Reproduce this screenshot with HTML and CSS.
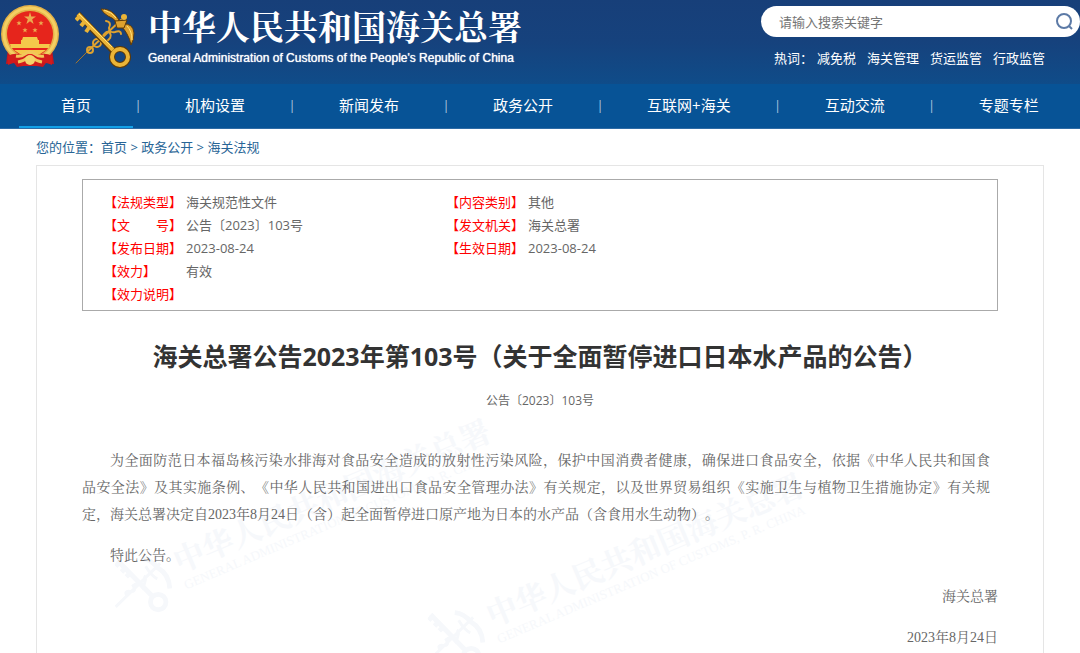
FILE: index.html
```
<!DOCTYPE html>
<html lang="zh-CN">
<head>
  <meta charset="UTF-8">
  <meta name="viewport" content="width=device-width, initial-scale=1">
  <title>海关总署公告2023年第103号</title>
  <link rel="stylesheet" href="styles.css">
</head>
<body>
  <header>
    <div class="header-top">
      <a class="logo" href="#">
        <svg class="emblem" viewBox="0 0 60 64" aria-hidden="true">
          <path d="M8 44 L6 59 L14 58 L17 62 L30 60 L43 62 L46 58 L54 59 L52 44 Z" fill="#c8161d"/>
          <circle cx="30" cy="29" r="29" fill="#e3b048"/>
          <circle cx="30" cy="29" r="26" fill="none" stroke="#f3cf63" stroke-width="3"/>
          <circle cx="30" cy="29" r="23" fill="#e6251c"/>
          <path d="M30 7 L31.300 11.500 L36 11.500 L32.200 14.300 L33.600 19 L30 16.200 L26.400 19 L27.800 14.300 L24 11.500 L28.700 11.500 Z" fill="#ecab50"/>
          <g fill="#ecab50">
            <path id="star" d="M19 15.500 l.7 1.800 h1.900 l-1.500 1.200 .6 1.900 -1.700-1.100 -1.700 1.100 .6-1.900 -1.500-1.200 h1.900z"/>
            <use href="#star" x="22"/>
            <use href="#star" x="6" y="7"/>
            <use href="#star" x="16" y="7"/>
          </g>
          <path d="M23 32 h14 l1 3 h-16z M21 35 h18 v4 h11 l-1 4 h-38 l-1-4 h11z M14 45 h32 l-6 4 h-20z" fill="#f4c84a"/>
          <path d="M8 51 Q15 47 22 50 H38 Q45 47 52 51 L52 60 Q46 57 42 58 L38 61 H22 L18 58 Q14 57 8 60 Z" fill="#d21b1c"/>
          <path d="M16 51 Q21 52 25 49 Q30 45 35 49 Q39 52 44 51 M18 57 Q24 56 27 53 H33 Q36 56 42 57" fill="none" stroke="#f2c75a" stroke-width="3"/>
          <circle cx="30" cy="55" r="5" fill="#f6d36a"/>
        </svg>
        <svg class="keys" viewBox="0 0 60 60" aria-hidden="true">
          <g fill="none" stroke="#dfa22e" stroke-linecap="round">
            <path d="M1 55 L13 43" stroke="#a5762b" stroke-width="1"/>
            <path d="M13 43 L46 12" stroke-width="2"/>
            <circle cx="15" cy="42" r="3" stroke-width="2"/>
            <circle cx="22" cy="35" r="4" stroke-width="2"/>
            <path d="M31 13 Q37 14 34 20 Q34 25 40 24 Q46 22 46 26 M26 31 Q31 21 35 25 Q38 30 30 34" stroke-width="2"/>
          </g>
          <path d="M3 6 L38 43" stroke="#5e3a08" stroke-width="6"/>
          <circle cx="45" cy="49" r="8" fill="none" stroke="#5e3a08" stroke-width="6"/>
          <g fill="none" stroke="#eab437">
            <path d="M3 6 L38 42" stroke-width="4"/>
            <path d="M5 8 L1 12 M10 13 L6 18 M15 18 L11 24" stroke-width="4"/>
            <circle cx="45" cy="49" r="8" stroke-width="4"/>
          </g>
          <g fill="#dfa22e" stroke="#5e3a08" stroke-width="1">
            <path d="M26 1 Q37 0 44 12 L42 15 Q39 10 33 8 Q28 5 26 1Z"/>
            <path d="M48 16 Q58 15 59 25 Q59 32 56 37 Q55 31 52 26 Q49 20 46 19Z"/>
            <path d="M40 13 L52 12 L49 20 L42 20Z"/>
          </g>
          <circle cx="49" cy="9" r="3" fill="#eab437"/>
          <path d="M29 2 Q37 4 41 10 M52 18 Q57 23 57 32 M4 6 L37 39" fill="none" stroke="#ffe27a" stroke-width="1"/>
        </svg>
        <span class="site-name">
          <strong>中华人民共和国海关总署</strong>
          <span lang="en">General Administration of Customs of the People's Republic of China</span>
        </span>
      </a>
      <div class="search-area">
        <form class="search" role="search">
          <input type="text" placeholder="请输入搜索关键字" aria-label="请输入搜索关键字">
          <button type="button" aria-label="搜索">
            <svg viewBox="0 0 18 18" aria-hidden="true"><circle cx="8" cy="8" r="7"/><path d="M13 13 L16 16"/></svg>
          </button>
        </form>
        <div class="hot-words">
          <span>热词：</span>
          <a href="#">减免税</a>
          <a href="#">海关管理</a>
          <a href="#">货运监管</a>
          <a href="#">行政监管</a>
        </div>
      </div>
    </div>
    <nav>
      <ul>
        <li><a class="active" href="#">首页</a></li>
        <li><a href="#">机构设置</a></li>
        <li><a href="#">新闻发布</a></li>
        <li><a href="#">政务公开</a></li>
        <li><a href="#">互联网+海关</a></li>
        <li><a href="#">互动交流</a></li>
        <li><a href="#">专题专栏</a></li>
      </ul>
    </nav>
  </header>

  <main>
    <div class="breadcrumb">您的位置：<a href="#">首页</a> &gt; <a href="#">政务公开</a> &gt; <a href="#">海关法规</a></div>

    <article>
      <div class="watermark watermark-left" aria-hidden="true">
        <svg viewBox="0 0 60 60">
          <g id="mark" fill="none" stroke="currentColor">
            <path d="M3 6 L38 42" stroke-width="5"/>
            <path d="M5 8 L1 12 M11 14 L7 18 M16 19 L12 23 M28 4 Q38 5 45 14 Q56 20 57 35" stroke-width="5"/>
            <path d="M1 54 L47 9 M13 43 Q9 37 16 38 Q23 39 19 32 Q25 27 29 34 Q34 24 30 22 M32 12 Q38 22 44 25" stroke-width="3"/>
            <circle cx="45" cy="49" r="8" stroke-width="5"/>
          </g>
        </svg>
        <div><b>中华人民共和国海关总署</b><span>GENERAL ADMINISTRATION OF CUSTOMS, P. R. CHINA</span></div>
      </div>
      <div class="watermark watermark-right" aria-hidden="true">
        <svg viewBox="0 0 60 60"><use href="#mark"/></svg>
        <div><b>中华人民共和国海关总署</b><span>GENERAL ADMINISTRATION OF CUSTOMS, P. R. CHINA</span></div>
      </div>

      <div class="info-box">
        <table>
          <tr><th>【法规类型】</th><td>海关规范性文件</td><th>【内容类别】</th><td>其他</td></tr>
          <tr><th>【文　　号】</th><td>公告〔2023〕103号</td><th>【发文机关】</th><td>海关总署</td></tr>
          <tr><th>【发布日期】</th><td>2023-08-24</td><th>【生效日期】</th><td>2023-08-24</td></tr>
          <tr><th>【效力】</th><td colspan="3">有效</td></tr>
          <tr><th>【效力说明】</th><td colspan="3"></td></tr>
        </table>
      </div>

      <h1>海关总署公告2023年第103号（关于全面暂停进口日本水产品的公告）</h1>
      <p class="doc-number">公告〔2023〕103号</p>

      <div class="content">
        <p>为全面防范日本福岛核污染水排海对食品安全造成的放射性污染风险，保护中国消费者健康，确保进口食品安全，依据《中华人民共和国食品&#8288;安全法》及其实施条例、《中华人民共和国进出口食品安全管理办法》有关规定，以及世界贸易组织《实施卫生与植物卫生措施协定》有关规定，海关总署决定自2023年8月24日（含）起全面暂停进口原产地为日本的水产品（含食用水生动物）。</p>
        <p>特此公告。</p>
        <p class="sign">海关总署</p>
        <p class="sign">2023年8月24日</p>
      </div>
    </article>
  </main>
</body>
</html>
```
FILE: styles.css
```
* {
  box-sizing: border-box;
}
body {
  display: flex;
  flex-direction: column;
  min-height: 100vh;
  margin: 0;
  font-family: "Open Sans", "Noto Sans CJK SC", sans-serif;
  font-size: 13px;
  color: #666;
  background: #fff;
  text-spacing-trim: space-all;
}
a {
  color: inherit;
  text-decoration: none;
}

/* header */
header {
  color: #fff;
  background: #075396;
}
.header-top {
  display: flex;
  justify-content: space-between;
  height: 84px;
  background: linear-gradient(#173f79 0, #16427d 50%, #0f4c89 100%);
}
.logo {
  display: flex;
  align-items: flex-start;
}
.emblem {
  width: 60px;
  height: 64px;
  margin-top: 5px;
}
.keys {
  width: 60px;
  height: 60px;
  margin: 8px 13px 0 15px;
}
.site-name {
  display: flex;
  flex-direction: column;
  padding-top: 5px;
}
.site-name strong {
  font-family: "Noto Serif CJK SC", "Noto Sans CJK SC", serif;
  font-size: 34px;
  line-height: 42px;
}
.site-name span {
  font-family: "Liberation Sans", Arial, sans-serif;
  font-size: 12px;
  line-height: 22px;
  text-shadow: 0 0 1px #fff;
}
.search-area {
  width: 319px;
  padding-top: 6px;
}
.search {
  display: flex;
  align-items: center;
  height: 31px;
  padding: 0 6px 0 18px;
  background: #fff;
  border-radius: 16px;
}
.search input {
  flex: 1;
  min-width: 0;
  height: 20px;
  padding: 0;
  border: none;
  outline: none;
  background: none;
  font: inherit;
}
.search input::placeholder {
  color: #757575;
}
.search button {
  display: flex;
  padding: 0;
  border: none;
  background: none;
  cursor: pointer;
}
.search svg {
  width: 18px;
  height: 18px;
  fill: none;
  stroke: #5c7aa6;
  stroke-width: 2;
}
.hot-words {
  display: flex;
  gap: 11px;
  padding: 11px 0 0 13px;
  line-height: 20px;
}
.hot-words span {
  margin-right: -7px;
}

/* main menu */
nav {
  border-bottom: 1px solid #2e6ba5;
}
nav ul {
  display: flex;
  margin: 0;
  padding: 0 0 0 19px;
  list-style: none;
}
nav li {
  display: flex;
  font-size: 15px;
  line-height: 42px;
  white-space: nowrap;
}
nav li + li::before {
  content: "|";
  width: 10px;
  color: #b4cbe0;
  font-size: 12px;
  line-height: 43px;
  text-align: center;
}
nav a {
  padding: 0 42px;
  border-bottom: 2px solid transparent;
}
nav a.active {
  border-color: #12a0e8;
}

/* page */
main {
  display: flex;
  flex: 1;
  flex-direction: column;
  margin: 0 36px;
}
.breadcrumb {
  height: 36px;
  line-height: 36px;
  color: #286596;
}
article {
  position: relative;
  flex: 1;
  padding: 13px 45px 0;
  border: 1px solid #e5e5e5;
  border-bottom: none;
  overflow: hidden;
}
.info-box {
  padding: 10px 21px 5px;
  border: 1px solid #aaa;
}
.info-box table {
  width: 100%;
  border-collapse: collapse;
  table-layout: fixed;
}
.info-box th,
.info-box td {
  height: 23px;
  padding: 0;
  line-height: 22px;
  text-align: left;
}
.info-box th {
  width: 82px;
  color: #f00;
  font-weight: normal;
}
.info-box th + td {
  width: 260px;
}
.info-box td:last-child {
  width: auto;
}
h1 {
  margin: 26px 0 0;
  color: #333;
  font-size: 25px;
  line-height: 38px;
  text-align: center;
}
.doc-number {
  margin: 16px 0 0;
  font-size: 12px;
  line-height: 20px;
  text-align: center;
}

/* document text */
.content {
  padding-top: 36px;
  font-family: "Liberation Serif", "Noto Serif CJK SC", "Noto Sans CJK SC", serif;
  font-size: 14px;
  line-height: 27px;
}
.content p {
  margin: 0 0 14px;
  padding-right: 8px;
  text-align: justify;
  text-indent: 2em;
}
.content p.sign {
  padding-right: 0;
  text-align: right;
}
.content p:last-child {
  margin-bottom: 0;
}

/* faint slanted marks behind the text */
.watermark {
  position: absolute;
  z-index: -1;
  display: flex;
  align-items: center;
  gap: 8px;
  color: #f6f8fb;
  font-family: "Noto Serif CJK SC", "Noto Sans CJK SC", serif;
  white-space: nowrap;
  transform: rotate(-23deg);
  transform-origin: 0 50%;
}
.watermark svg {
  width: 58px;
  height: 58px;
  transform: rotate(23deg);
}
.watermark b,
.watermark span {
  display: block;
}
.watermark b {
  font-size: 31px;
  line-height: 36px;
}
.watermark span {
  font-family: "Liberation Serif", serif;
  font-size: 13px;
  line-height: 18px;
}
.watermark-left {
  top: 400px;
  left: 80px;
}
.watermark-right {
  top: 454px;
  left: 393px;
}
```
